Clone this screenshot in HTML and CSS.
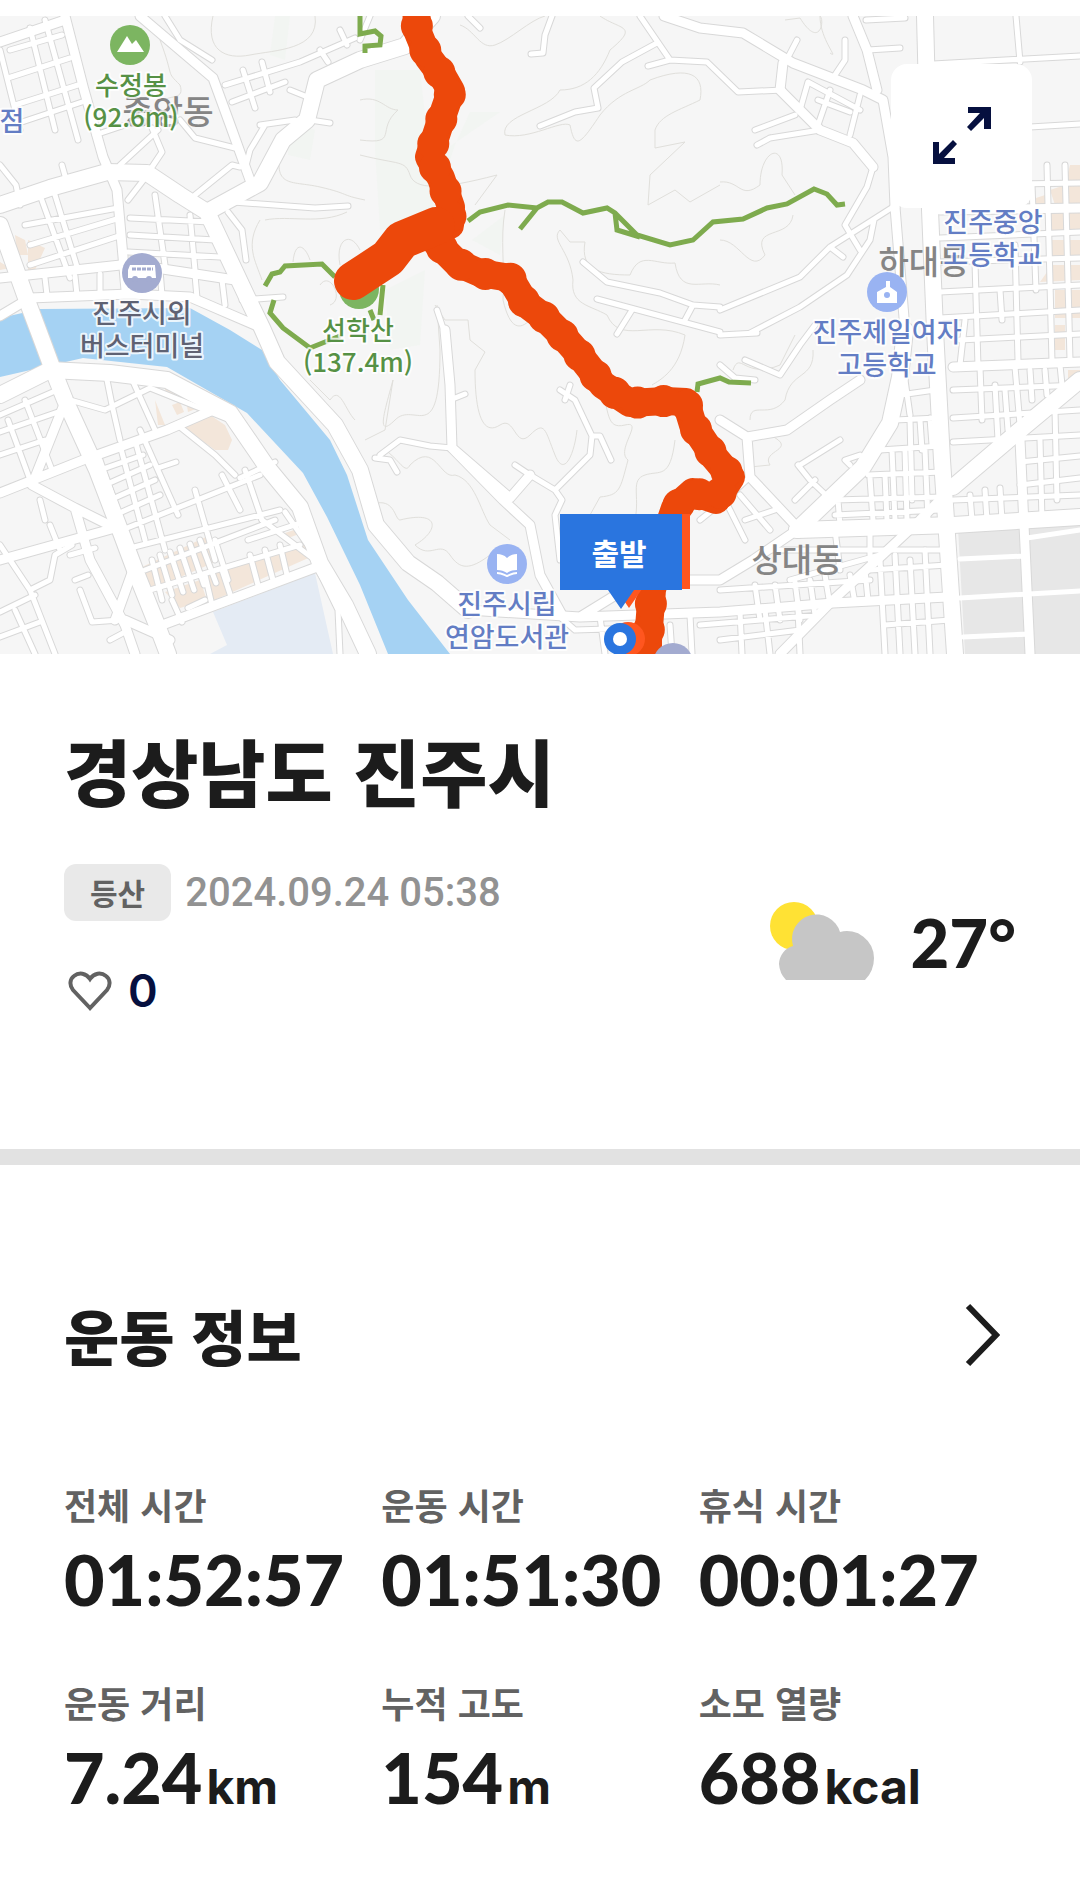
FILE: index.html
```html
<!DOCTYPE html>
<html lang="ko">
<head>
  <meta charset="UTF-8">
  <meta name="viewport" content="width=device-width, initial-scale=1">
  <title>경상남도 진주시</title>
  <link rel="stylesheet" href="styles.css">
</head>
<body>

<main class="page">
  <div class="map">
    <svg class="map-canvas" viewBox="0 16 1080 638" role="img" aria-label="등산 경로 지도">
      <defs>
        <g id="roads-wide">
          <path d="M0 205L50 188L107 172L147 173L180 195L207 212L247 297L262 328L277 362L335 425L360 470L376 525L408 563L437 583L468 610"/>
          <path d="M207 212L260 183L283 140L307 120L317 80L360 60L405 46L432 16"/>
          <path d="M0 225L25 295L40 335L53 370L65 400L97 470L120 530L135 570L157 625L168 654"/>
          <path d="M0 395L50 370L110 373L167 380L230 413L267 467L300 507L320 563L345 605L368 654"/>
          <path d="M925 16L930 210L935 330L942 460L955 654"/>
          <path d="M1080 380L1020 430L953 487"/>
          <path d="M797 530L953 525L1080 517"/>
          <path d="M905 330L900 377L890 423L863 467L797 530"/>
        </g>
        <g id="roads-mid">
          <path d="M140 16L213 78L232 130L250 180"/>
          <path d="M65 16L84 90L103 157L117 190L126 290"/>
          <path d="M0 42L65 20M0 278L130 264L235 280M0 316L30 298L130 294L190 297L262 328"/>
          <path d="M0 493L83 460L167 430L213 410M32 485L65 402M32 485L75 508L115 528L0 560M75 508L90 560L125 625L135 654"/>
          <path d="M157 627L317 567M115 620L133 570M125 620L170 640"/>
          <path d="M445 330L450 385L452 448L503 500L530 525L540 575L562 615M452 448L510 498L530 475"/>
          <path d="M468 610L580 617L720 612L833 603L947 597M580 617L640 580L720 580L753 560L797 530"/>
          <path d="M953 487L920 520L877 560L833 600L780 654"/>
          <path d="M860 380L830 400L787 430L747 437L720 420M747 437L750 477L797 527"/>
          <path d="M664 16L700 28L743 33L793 63L863 90L883 100L893 157L895 207"/>
          <path d="M853 16L867 50L877 90M783 63L780 90L820 130L853 143L873 167"/>
          <path d="M940 210L1080 208M953 367L1080 362M1020 440L1024 525L1030 654M895 207L905 330"/>
        </g>
        <g id="roads-thin">
          <!-- west side, north of the river -->
          <path d="M0 50L20 130M30 28L55 130M45 20L78 140M10 50L62 35M8 78L70 58M15 105L78 85M22 122L82 102M0 165L16 185L20 205M62 165L67 183M95 135L140 120M120 165L158 130M148 173L162 152L152 128M180 120L195 138L235 148M165 16L180 40L212 60"/>
          <path d="M225 85L300 62L355 38M232 102L285 82M243 70L255 108M262 62L270 92M340 30L347 45M320 50L328 62M290 90L310 98L305 112M265 125L250 150L245 170M260 125L295 120M310 120L330 123M195 195L232 165L240 167"/>
          <path d="M40 195L70 278M55 195L78 270M25 225L118 208M30 245L120 218M30 265L122 235M130 218L210 222M130 235L215 240M128 252L220 257M155 195L165 265M190 215L195 270M128 200L145 178M45 278L47 295M75 276L77 295M100 274L100 295M160 270L162 295M195 275L197 298M222 280L225 305M228 212L242 230L246 260M233 202L315 208L348 206M242 300L283 297"/>
          <!-- south bank grid -->
          <path d="M0 415L62 388M0 432L58 412M0 455L45 440M8 420L30 480M25 400L52 470M70 400L105 410L150 388L230 420M105 370L112 405L120 440M130 375L155 430M140 430L178 515M100 460L135 560M180 427L215 455L235 475M120 445L145 540M135 440L165 550M100 470L143 455M105 485L150 465M110 500L155 480M115 515L160 495M122 530L260 475M130 548L280 510M195 490L215 560M222 475L240 510M245 470L262 520M158 468L176 462"/>
          <path d="M240 478L275 462M248 540L310 520M145 570L275 520M150 590L300 545M160 555L172 595M170 552L183 592M180 548L194 590M190 544L204 585M200 540L216 583M215 540L228 580M152 560L162 600M172 600L182 622M205 575L212 605M222 570L232 600M250 555L258 585M265 550L273 580M280 545L287 575M188 608L205 600M262 520L315 560M285 512L318 560M317 567L338 610L340 654"/>
          <path d="M0 545L30 590L55 654M30 590L50 580L55 555L72 545M0 612L35 595M0 637L40 622M15 610L35 654M70 555L95 548M75 580L88 575M80 590L92 622L120 620M110 640L125 632M50 525L60 550M40 500L45 520M380 455L400 440L430 446L452 448M375 458L390 460L397 472M455 398L465 394"/>
          <path d="M560 390L575 400L592 436L590 455L555 490L562 500L555 515L560 560M592 436L600 436L611 460M530 475L515 465M530 475L555 490M570 385L565 400"/>
          <!-- hill roads -->
          <path d="M468 16L480 28M552 16L545 35L543 53L531 54M640 16L670 60L707 62L738 92L783 90M670 60L648 66M657 43L622 62L594 88L598 108L575 112L540 126"/>
          <path d="M583 262L607 282L660 293L693 305L720 307M597 299L720 332M693 305L685 320M632 310L617 334M437 310L447 340M370 16L360 40"/>
          <path d="M893 207L830 247L800 277L720 310M874 220L870 240L847 275L800 307L750 333M873 167L867 187L845 225L860 250M830 247L843 257M720 335L757 333M745 360L780 375L800 345L815 325M720 365L735 378L755 380"/>
          <path d="M797 40L785 63M845 40L845 60L835 75M808 82L800 110M830 90L818 125M860 95L850 135M755 130L795 115M770 138L820 130M757 145L770 138M808 82L860 110M818 100L850 112M868 50L900 48M866 20L905 18M1016 16L1020 62M933 64L1080 56M1030 127L1080 124"/>
          <!-- east side grid -->
          <path d="M940 185L1080 183M940 238L1080 232M940 262L1080 258M940 292L1080 285M940 318L1080 310M960 340L1080 334M953 390L1080 385M953 418L1080 410M953 442L1080 435M1020 462L1080 456M1020 485L1080 478M953 500L1080 495"/>
          <path d="M975 262L978 367M1015 245L1018 360M1047 165L1052 362M1065 165L1070 360M1032 185L1036 290M1000 290L1002 320M965 320L960 365M980 367L982 420M995 385L998 440M1015 367L1020 425M1030 370L1032 400M1045 370L1047 395M1060 365L1062 385M1005 390L1008 430M1055 410L1057 500M1040 440L1042 520M970 495L972 520M985 490L987 520M1000 488L1002 520"/>
          <path d="M900 395L935 390M895 420L938 418M880 450L940 446M868 475L942 472M835 500L942 497M835 515L940 510M905 380L910 415M910 420L912 500M920 420L922 450M930 418L932 445M892 450L895 520M905 450L907 520M870 478L873 520M885 475L887 520M838 500L840 525M925 450L928 520"/>
          <path d="M750 477L725 500L700 520M725 500L745 540M740 495L770 530M745 520L775 510M800 465L840 440M798 465L810 480L828 497M795 500L815 480M850 465L845 460L860 455M770 550L940 550M790 580L880 555M835 530L840 570M870 530L870 560"/>
          <path d="M720 590L870 580M700 625L820 615M720 640L800 630M755 585L760 620M775 585L780 620M795 582L800 620M810 580L815 615M825 575L830 605M850 575L855 603M865 570L868 600M880 560L885 654M895 555L900 654M910 560L915 654M925 550L930 654M870 570L947 565M885 625L950 620M765 610L770 654M798 610L800 654M740 612L742 654M690 615L692 654M670 625L672 654M600 617L605 654M560 617L575 630L640 628"/>
        </g>
        <path id="track" d="M416 0L417 30L428 57L443 77L451 91L442 117L429 157L441 178L451 207L450 225L428 234L457 263L480 273L510 278L525 303L545 318L562 335L577 352L603 385L630 403L665 401L686 402L693 425L715 458L731 477L716 500L693 492L675 508L664 540L652 590L648 640V680"/>
      </defs>

      <rect class="land" x="0" y="16" width="1080" height="638"/>
      <path class="grove" d="M375 70L420 70L430 160L500 112L470 112L455 145L440 190L430 220L380 230L375 150ZM385 290L425 270L420 345L390 350ZM275 16L290 16L285 60L270 55ZM290 120L315 130L310 160L288 155ZM472 240L505 215L500 255Z"/>
      <path class="contour" d="M213 16C205 50 225 60 250 55S320 50 315 16M283 140C270 190 290 180 320 187S340 195 365 200M260 220C245 245 255 260 262 280M265 220C290 215 320 225 347 212M293 262C295 240 305 245 310 260M340 265C335 240 350 230 360 250M320 285C330 270 345 300 330 305M360 100C380 95 385 110 398 110C375 130 400 145 360 140M360 155C400 165 405 160 410 175S440 190 497 175L475 205M460 25C475 30 480 50 495 45S530 20 545 16M600 16C620 30 640 25 610 50C600 75 585 90 560 90C550 110 500 115 505 135C530 140 560 120 570 125C575 150 580 145 600 115C620 90 640 90 650 80C690 65 705 75 700 100C680 110 660 115 655 130L655 148L685 142L650 175L648 205L675 190L690 202L720 185M560 230C550 240 570 250 573 280C570 305 590 305 607 315C620 345 650 320 685 335C680 370 660 380 652 385M560 230L570 242L585 242C580 270 600 275 630 275C640 250 655 265 675 263C680 295 700 280 720 285M505 210C500 240 505 265 503 300C510 330 520 330 530 320M435 305L445 320L468 320L470 340L485 352L475 370C475 420 485 435 500 425S515 450 530 435S545 430 555 455S575 450 577 430M393 380C385 410 375 440 395 420S440 450 440 350L437 305M393 380L385 430L365 440M385 450C400 460 405 475 410 465C435 440 440 480 455 475C475 480 480 510 490 525L510 540M377 503C395 500 395 520 400 520C440 510 440 530 415 545C430 560 440 540 450 555S470 570 490 555M600 385C610 410 605 430 625 425S615 450 628 460C620 490 620 495 600 497L590 515M675 440C670 480 660 470 645 475S640 495 635 520"/>
      <path class="contour" d="M785 20L800 18C820 50 825 20 820 16C820 40 840 60 830 53M720 182C740 180 740 200 760 185C760 150 785 140 782 175L795 195M793 215C790 240 750 225 765 255C750 275 740 240 720 240M733 370C740 350 745 380 780 365L795 335M813 350C815 380 790 370 785 400C770 420 750 400 750 420M770 435C800 450 760 450 770 465L750 467M310 380L330 400C340 385 345 410 355 420M160 40C175 80 165 70 180 85C185 100 170 95 165 100"/>

      <!-- 남강 -->
      <path class="river" d="M0 318L40 309L190 308L230 330L262 350L280 380L330 440L347 475L368 540L408 600L450 654L388 654L360 585L327 517L303 473L247 413L167 367L83 358L0 377Z"/>
      <path class="campus" d="M213 612L315 573L333 654L210 654L227 645Z"/>
      <path class="industry" d="M958 528L1080 520V654H965Z"/>
      <path class="shops" d="M183 427L210 415L225 425L232 440L228 450L215 450ZM163 385L178 396L170 400ZM155 400L165 425L158 425ZM172 405L180 402L184 412L177 415ZM186 400L198 408L188 412ZM140 568L210 535L220 560L150 590ZM165 592L200 580L207 600L180 608ZM205 577L310 540L315 555L210 602ZM285 533L300 528L302 533L288 538ZM15 235L25 240L28 255L17 255ZM28 240L45 248L35 270L28 275ZM0 262L10 268L0 270ZM1030 200L1045 195L1045 205L1030 208ZM1050 212H1080V235H1050ZM1050 240H1080V260H1050ZM1052 265H1080V280L1040 282ZM1055 290H1080V318H1055ZM1055 325H1065V350H1055ZM1070 165H1080V205H1055L1050 190L1065 185ZM1068 370H1080V385H1068Z"/>

      <use href="#roads-thin" class="casing casing-thin"/>
      <use href="#roads-mid" class="casing casing-mid"/>
      <use href="#roads-wide" class="casing casing-wide"/>
      <use href="#roads-thin" class="road road-thin"/>
      <use href="#roads-mid" class="road road-mid"/>
      <use href="#roads-wide" class="road road-wide"/>
      <path class="block-road" d="M960 559L1026 556M960 598L1080 591M963 637L1030 634M1027 538L1080 530"/>

      <!-- 등산로 -->
      <path class="trail" d="M468 221L480 212L508 205L537 208L548 202L562 202L583 213L607 208L615 213L637 235L670 245L693 240L713 222L743 219L767 208L787 204L814 189L827 194L837 205L845 204M537 208L520 229M615 213L617 230L640 237M265 286L272 274L280 272L285 266L322 264L335 277M274 300L270 313L283 328L310 348L340 336M360 16V34L375 31L381 36L380 45L365 46V53M383 285L380 315M370 310L374 320M697 392L698 384L720 378L729 382L751 383"/>

      <text class="area" x="168" y="124">중앙동</text>
      <text class="area" x="924" y="274">하대동</text>
      <text class="area" x="797" y="572">상대동</text>

      <circle class="pin-hill" cx="359" cy="289" r="20"/>

      <use href="#track" class="track"/>
      <use href="#track" class="track track-steps"/>
      <path class="track track-end" d="M436 226L402 240L388 258L353 281"/>

      <circle class="pin-hill" cx="130" cy="45" r="20"/>
      <path class="glyph" d="M117 52L127 36L132 44L136 40L144 52Z"/>
      <text class="poi hill" x="131" y="95">수정봉</text>
      <text class="poi hill" x="131" y="127">(92.6m)</text>
      <text class="poi hill" x="358" y="340">선학산</text>
      <text class="poi hill" x="358" y="372">(137.4m)</text>

      <text class="poi place" x="12" y="131">점</text>

      <circle class="pin-bus" cx="142" cy="273" r="20"/>
      <path class="glyph" d="M130 265H155L156 278H128V270Z"/>
      <path class="glyph-line" d="M132 269H153"/>
      <circle class="pin-bus" cx="135" cy="279" r="3"/>
      <circle class="pin-bus" cx="149" cy="279" r="3"/>
      <text class="poi station" x="142" y="323">진주시외</text>
      <text class="poi station" x="142" y="356">버스터미널</text>

      <text class="poi place" x="993" y="232">진주중앙</text>
      <text class="poi place" x="993" y="265">고등학교</text>

      <circle class="pin-place" cx="887" cy="292" r="20"/>
      <path class="glyph" d="M886 281H890V287L897 292V303H877V292L886 287Z"/>
      <circle class="pin-place" cx="887" cy="295" r="3"/>
      <text class="poi place" x="887" y="342">진주제일여자</text>
      <text class="poi place" x="887" y="375">고등학교</text>

      <circle class="pin-place" cx="507" cy="564" r="20"/>
      <path class="glyph" d="M497 554C501 554 504 555 507 558C510 555 513 554 517 554V570C513 570 510 571 507 573C504 571 501 570 497 570Z"/>
      <path class="glyph-wave" d="M497 573C502 573 504 575 507 576C510 575 512 573 517 573"/>
      <text class="poi place" x="507" y="614">진주시립</text>
      <text class="poi place" x="507" y="647">연암도서관</text>
      <circle class="pin-bus" cx="673" cy="663" r="20"/>

      <!-- 출발 marker, the finish flag shows behind it -->
      <path class="finish" d="M570 514H690V589H642L629 608L616 589H570Z"/>
      <circle class="finish" cx="628" cy="639" r="17"/>
      <circle class="start" cx="620" cy="639" r="16"/>
      <circle class="start-dot" cx="620" cy="639" r="7"/>
      <path class="start" d="M560 514H682V590H634L621 609L608 590H560Z"/>
      <text class="start-label" x="619" y="565">출발</text>
    </svg>

    <button class="expand" type="button" aria-label="지도 확대">
      <svg width="58" height="58" viewBox="0 0 58 58">
        <path d="M35 0H58V22H51V11L38 24L34 20L47 6H35ZM0 35H6V47L20 33L24 37L11 51H22V57H0Z"/>
      </svg>
    </button>
  </div>

  <section class="summary">
    <h1>경상남도 진주시</h1>
    <div class="summary-row">
      <div class="summary-info">
        <div class="meta">
          <span class="badge">등산</span>
          <time datetime="2024-09-24T05:38">2024.09.24 05:38</time>
        </div>
        <button class="like" type="button" aria-label="좋아요 0">
          <svg width="44" height="40" viewBox="0 0 44 40">
            <path d="M22 37L5 19C1 14 2 8 6 5C11 1 18 2 22 8C26 2 33 1 38 5C42 8 43 14 39 19Z"/>
          </svg>
          <span>0</span>
        </button>
      </div>
      <div class="weather">
        <svg width="104" height="80" viewBox="0 0 104 80">
          <circle class="sun" cx="24" cy="24" r="24"/>
          <path class="cloud" d="M16 78A25 25 0 0 1 9 62A19 19 0 0 1 23 44A24 24 0 0 1 70 30A27 27 0 0 1 104 56Q104 69 95 78Z"/>
        </svg>
        <span class="temp">27°</span>
      </div>
    </div>
  </section>

  <section class="workout">
    <div class="workout-head">
      <h2>운동 정보</h2>
      <a class="more" href="#" aria-label="운동 정보 더보기">
        <svg width="36" height="64" viewBox="0 0 36 64">
          <path d="M4 3L32 32L4 61"/>
        </svg>
      </a>
    </div>
    <dl class="stats">
      <div class="stat">
        <dt>전체 시간</dt>
        <dd>01:52:57</dd>
      </div>
      <div class="stat">
        <dt>운동 시간</dt>
        <dd>01:51:30</dd>
      </div>
      <div class="stat">
        <dt>휴식 시간</dt>
        <dd>00:01:27</dd>
      </div>
      <div class="stat">
        <dt>운동 거리</dt>
        <dd>7.24<span class="unit">km</span></dd>
      </div>
      <div class="stat">
        <dt>누적 고도</dt>
        <dd>154<span class="unit">m</span></dd>
      </div>
      <div class="stat">
        <dt>소모 열량</dt>
        <dd>688<span class="unit">kcal</span></dd>
      </div>
    </dl>
  </section>
</main>

</body>
</html>
```
FILE: styles.css
```css
* {
  box-sizing: border-box;
}
body {
  margin: 0;
  background-color: #fff;
  color: #1c1c1c;
  font-family: "Noto Sans CJK KR", sans-serif;
}
h1, h2, dl, dd {
  margin: 0;
}
button {
  border: none;
  padding: 0;
  cursor: pointer;
}
svg {
  display: block;
}
.page {
  padding-top: 16px;
}

/* 지도 */
.map {
  position: relative;
}
.map-canvas {
  width: 100%;
  height: auto;
}
.land {
  fill: #f6f6f6;
}
.grove {
  fill: #f2f5f2;
}
.contour {
  fill: none;
  stroke: #e0dfdb;
  stroke-width: 1;
}
.river {
  fill: #a5d2f3;
}
.campus {
  fill: #e4ebf4;
}
.industry {
  fill: #e7e7e7;
}
.shops {
  fill: #f3e6da;
}
.casing, .road, .block-road {
  fill: none;
  stroke-linecap: round;
  stroke-linejoin: round;
}
.casing {
  stroke: #d8d8d8;
}
.road, .block-road {
  stroke: #fff;
}
.casing-thin { stroke-width: 7px; }
.casing-mid { stroke-width: 11px; }
.casing-wide { stroke-width: 18px; }
.road-thin { stroke-width: 5px; }
.road-mid { stroke-width: 9px; }
.road-wide { stroke-width: 16px; }
.block-road { stroke-width: 5px; }
.trail {
  fill: none;
  stroke: #7eab4e;
  stroke-width: 5px;
}
.track {
  fill: none;
  stroke: #ec480b;
  stroke-width: 28px;
  stroke-linecap: round;
  stroke-linejoin: round;
}
.track-steps {
  stroke-width: 32px;
  stroke-dasharray: 0 26;
}
.track-end {
  stroke-width: 38px;
}
.pin-hill { fill: #7cb561; }
.pin-bus { fill: #a3abd0; }
.pin-place { fill: #99b3f2; }
.glyph { fill: #fff; }
.glyph-line {
  stroke: #a3abd0;
  stroke-width: 3px;
  stroke-dasharray: 4 1;
}
.glyph-wave {
  fill: none;
  stroke: #fff;
  stroke-width: 2px;
}
.map text {
  text-anchor: middle;
}
.area {
  font-size: 33px;
  font-weight: 500;
  fill: #858585;
}
.poi {
  font-size: 27px;
  font-weight: 500;
  stroke: #fff;
  stroke-opacity: 0.8;
  stroke-width: 4px;
  stroke-linejoin: round;
  paint-order: stroke;
}
.hill {
  font-size: 26px;
  fill: #569145;
}
.station { fill: #5f6273; }
.place { fill: #637dc4; }
.finish { fill: #ff561f; }
.start { fill: #2a75df; }
.start-dot { fill: #fff; }
.start-label {
  font-size: 30px;
  font-weight: 700;
  fill: #fff;
}
.expand {
  position: absolute;
  top: 48px;
  right: 48px;
  width: 141px;
  height: 144px;
  border-radius: 16px;
  background-color: #fff;
  display: flex;
  justify-content: center;
  align-items: center;
  fill: #06103f;
}

/* 제목, 날짜, 날씨 */
.summary {
  padding: 73px 64px 132px;
  border-bottom: 16px solid #e2e2e2;
}
h1 {
  font-size: 73px;
  line-height: 84px;
  font-weight: 900;
}
.summary-row {
  display: flex;
  justify-content: space-between;
  align-items: center;
  margin-top: 53px;
}
.meta {
  display: flex;
  align-items: center;
  gap: 14px;
}
.badge {
  padding: 0 26px;
  border-radius: 12px;
  background-color: #e9e9e9;
  color: #626262;
  font-size: 30px;
  line-height: 57px;
  font-weight: 700;
}
time {
  color: #929292;
  font-family: Roboto, sans-serif;
  font-size: 40px;
  line-height: 57px;
  font-weight: 500;
}
.like {
  display: flex;
  align-items: center;
  gap: 16px;
  margin-top: 44px;
  padding-left: 4px;
  background: none;
  color: #06103f;
  font-family: Inter, sans-serif;
  font-size: 45px;
  line-height: 52px;
  font-weight: 600;
}
.like path {
  fill: none;
  stroke: #626262;
  stroke-width: 4px;
}
.weather {
  display: flex;
  align-items: center;
  gap: 36px;
  padding-top: 3px;
}
.sun { fill: #ffe234; }
.cloud { fill: #c6c6c6; }
.temp {
  font-family: Lato, sans-serif;
  font-size: 67px;
  line-height: 80px;
  font-weight: 900;
}

/* 운동 정보 */
.workout {
  padding: 128px 64px 64px;
}
.workout-head {
  display: flex;
  justify-content: space-between;
  align-items: center;
}
h2 {
  font-size: 60px;
  line-height: 84px;
  font-weight: 900;
}
.more {
  padding-right: 16px;
}
.more path {
  fill: none;
  stroke: #1c1c1c;
  stroke-width: 6px;
}
.stats {
  display: grid;
  grid-template-columns: repeat(3, 1fr);
  row-gap: 54px;
  margin-top: 102px;
}
dt {
  color: #626262;
  font-size: 36px;
  line-height: 50px;
  font-weight: 700;
}
dd {
  margin-top: 6px;
  font-family: Lato, sans-serif;
  font-size: 70px;
  line-height: 88px;
  font-weight: 900;
}
.unit {
  margin-left: 4px;
  font-family: Inter, sans-serif;
  font-size: 48px;
  font-weight: 700;
}
```
